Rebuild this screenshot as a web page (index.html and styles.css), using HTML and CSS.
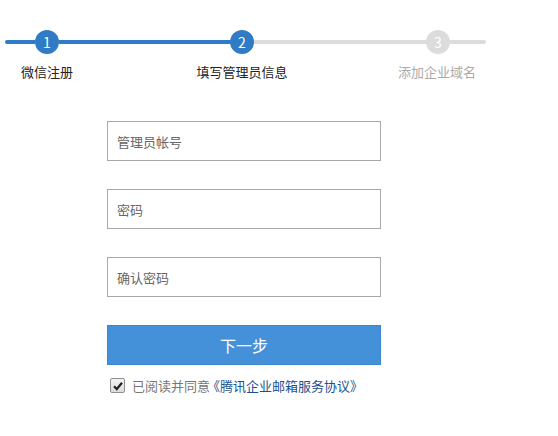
FILE: index.html
```html
<!DOCTYPE html>
<html lang="zh-CN">
<head>
    <meta charset="UTF-8">
    <meta name="viewport" content="width=device-width, initial-scale=1.0">
    <title>填写管理员信息</title>
    <link rel="stylesheet" href="styles.css">
</head>
<body>
    <div class="steps">
        <div class="track">
            <span class="seg seg-done seg-first"></span>
            <span class="dot dot-done">1</span>
            <span class="seg seg-done seg-mid"></span>
            <span class="dot dot-done">2</span>
            <span class="seg seg-todo seg-mid2"></span>
            <span class="dot dot-todo">3</span>
            <span class="seg seg-todo seg-last"></span>
        </div>
        <div class="labels">
            <span class="label">微信注册</span>
            <span class="label">填写管理员信息</span>
            <span class="label label-todo">添加企业域名</span>
        </div>
    </div>

    <form class="form" onsubmit="return false">
        <input class="field" type="text" placeholder="管理员帐号">
        <input class="field" type="password" placeholder="密码">
        <input class="field" type="password" placeholder="确认密码">
        <button class="next" type="submit">下一步</button>
        <label class="agree">
            <span class="check">
                <svg width="10" height="10" viewBox="0 0 10 10"><path d="M1 5.2 L3.8 8 L9 1.8" fill="none" stroke="#222" stroke-width="2.2"/></svg>
            </span>
            已阅读并同意<a href="#" class="terms">《腾讯企业邮箱服务协议》</a>
        </label>
    </form>
</body>
</html>
```

FILE: styles.css
```css
body {
    margin: 0;
    background-color: #fff;
    font-family: "Microsoft YaHei", "Noto Sans CJK SC", "Noto Sans", sans-serif;
    color: #333;
}
.steps {
    padding-top: 30px;
}
.steps .track {
    display: flex;
    align-items: center;
    margin-left: 5px;
    height: 24px;
}
.steps .seg {
    height: 4px;
}
.steps .seg-done {
    background-color: #2f7bc5;
}
.steps .seg-todo {
    background-color: #dcdcdc;
}
.steps .seg-first {
    width: 30px;
    border-radius: 2px 0 0 2px;
}
.steps .seg-mid {
    width: 171px;
}
.steps .seg-mid2 {
    width: 172px;
}
.steps .seg-last {
    width: 36px;
    border-radius: 0 2px 2px 0;
}
.steps .dot {
    width: 24px;
    height: 24px;
    border-radius: 50%;
    color: #fff;
    font-size: 14px;
    line-height: 24px;
    text-align: center;
}
.steps .dot-done {
    background-color: #2f7bc5;
}
.steps .dot-todo {
    background-color: #dcdcdc;
}
.steps .labels {
    display: grid;
    grid-template-columns: 94px 94px 94px;
    column-gap: 101px;
    margin-top: 9px;
}
.steps .label {
    text-align: center;
    font-size: 13px;
    line-height: 18px;
    color: #222;
}
.steps .label-todo {
    color: #aaa;
}
.form {
    display: flex;
    flex-direction: column;
    width: 274px;
    margin: 40px 0 0 107px;
}
.form .field {
    height: 40px;
    margin: 0 0 28px;
    padding: 0 9px;
    border: 1px solid #a9a9a9;
    box-sizing: border-box;
    font-family: inherit;
    font-size: 13px;
    color: #333;
    outline: none;
}
.form .field::placeholder {
    color: #666;
}
.form .next {
    height: 40px;
    border: 1px solid #3a86d0;
    background-color: #4591d9;
    color: #fff;
    font-family: inherit;
    font-size: 16px;
    cursor: pointer;
}
.form .agree {
    display: flex;
    align-items: center;
    margin-top: 11px;
    padding-left: 3px;
    font-size: 13px;
    color: #777;
}
.form .check {
    display: flex;
    align-items: center;
    justify-content: center;
    width: 13px;
    height: 13px;
    margin-right: 7px;
    border: 1px solid #8f8f8f;
    border-radius: 2px;
    background: linear-gradient(#f4f4f4, #dcdcdc);
}
.form .terms {
    margin-left: -3px;
    color: #1c4f8c;
    text-decoration: none;
}
```
